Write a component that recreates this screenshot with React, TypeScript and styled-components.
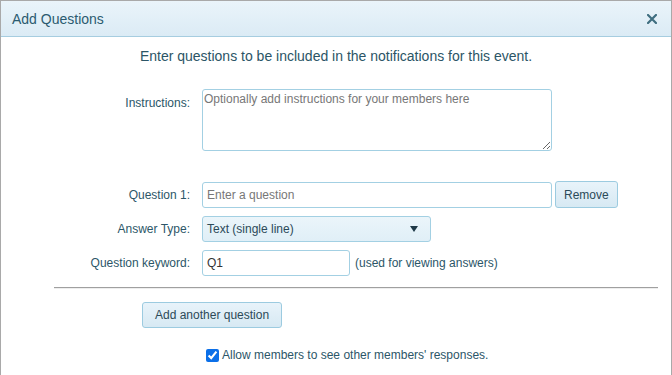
import styled, { createGlobalStyle } from 'styled-components'

const GlobalStyle = createGlobalStyle`
    html, body {
        margin: 0;
        padding: 0;
        background: #fff;
    }
    body {
        font-family: "Liberation Sans", Arial, sans-serif;
    }
`

const Dialog = styled.div`
    width: 672px;
    height: 375px;
    box-sizing: border-box;
    border: 1px solid #a9a9a9;
    border-bottom: none;
    overflow: hidden;
    background: #fff;
`

const Header = styled.div`
    display: flex;
    align-items: center;
    justify-content: space-between;
    height: 35px;
    padding: 0 14px 0 11px;
    background: linear-gradient(#eaf4fa, #dbebf5);
    border-bottom: 1px solid #a6cde0;
`

const Title = styled.h1`
    margin: 0;
    font-size: 14px;
    font-weight: 400;
    color: #2b5b70;
`

const Close = styled.button`
    border: none;
    background: none;
    padding: 0;
    display: flex;
    cursor: pointer;
`

const Body = styled.div`
    padding-top: 11px;
`

const Intro = styled.p`
    margin: 0 0 25px;
    text-align: center;
    font-size: 14px;
    color: #2b5566;
`

const Row = styled.div<{ top?: boolean; gapTop?: number }>`
    display: grid;
    grid-template-columns: 189px auto;
    column-gap: 12px;
    align-items: ${props => (props.top ? 'start' : 'center')};
    margin-top: ${props => props.gapTop ?? 0}px;
    margin-bottom: 8px;
`

const Label = styled.label<{ top?: boolean }>`
    text-align: right;
    font-size: 12px;
    color: #2c5668;
    padding-top: ${props => (props.top ? '7px' : '0')};
`

const Field = styled.div`
    display: flex;
    align-items: center;
    gap: 3px;
`

const boxBorder = `
    box-sizing: border-box;
    border: 1px solid #a3d0e3;
    border-radius: 3px;
    font-family: "Liberation Sans", Arial, sans-serif;
    font-size: 12px;
    color: #333;
    outline: none;
`

const TextArea = styled.textarea`
    ${boxBorder}
    width: 350px;
    height: 62px;
    padding: 2px 1px;
    resize: both;
    &::placeholder {
        color: #777;
    }
`

const Input = styled.input<{ width: number }>`
    ${boxBorder}
    width: ${props => props.width}px;
    height: 26px;
    padding: 0 4px;
    &::placeholder {
        color: #777;
    }
`

const Button = styled.button`
    ${boxBorder}
    height: 27px;
    padding: 0 8px;
    background: linear-gradient(#e8f3fa, #d7e9f3);
    border-color: #9ccbe0;
    color: #2c4a58;
    cursor: pointer;
`

const Select = styled.div`
    ${boxBorder}
    width: 229px;
    height: 26px;
    display: flex;
    align-items: center;
    justify-content: space-between;
    padding: 0 8px 0 4px;
    background: linear-gradient(#ebf5fa, #e0eff7);
    color: #2c4a58;
`

const Arrow = styled.span`
    width: 0;
    height: 0;
    border-left: 4px solid transparent;
    border-right: 4px solid transparent;
    border-top: 6px solid #1f3a48;
    margin-right: 4px;
`

const Hint = styled.span`
    font-size: 12px;
    color: #2c5668;
    margin-left: 2px;
`

const Divider = styled.hr`
    margin: 11px 13px 13px 53px;
    border: none;
    border-top: 1px solid #a0a0a0;
    border-bottom: 1px solid #eee;
`

const AddRow = styled.div`
    padding-left: 141px;
`

const AddButton = styled(Button)`
    height: 26px;
    padding: 0 12px;
`

const CheckRow = styled.label`
    display: flex;
    align-items: center;
    gap: 3px;
    margin: 20px 0 0 205px;
    font-size: 12px;
    color: #2c5668;
`

const Check = styled.input`
    margin: 0;
    width: 13px;
    height: 13px;
    accent-color: #0b6fe8;
`

export default function App() {
    return (
        <>
            <GlobalStyle />
            <Dialog>
                <Header>
                    <Title>Add Questions</Title>
                    <Close aria-label="Close">
                        <svg width="10" height="10" viewBox="0 0 10 10">
                            <path d="M1 1 L9 9 M9 1 L1 9" stroke="#3f6e80" strokeWidth="2.2" strokeLinecap="square" />
                        </svg>
                    </Close>
                </Header>
                <Body>
                    <Intro>Enter questions to be included in the notifications for this event.</Intro>
                    <Row top>
                        <Label top>Instructions:</Label>
                        <TextArea placeholder="Optionally add instructions for your members here" />
                    </Row>
                    <Row gapTop={30}>
                        <Label>Question 1:</Label>
                        <Field>
                            <Input width={350} placeholder="Enter a question" />
                            <Button>Remove</Button>
                        </Field>
                    </Row>
                    <Row>
                        <Label>Answer Type:</Label>
                        <Select>
                            <span>Text (single line)</span>
                            <Arrow />
                        </Select>
                    </Row>
                    <Row>
                        <Label>Question keyword:</Label>
                        <Field>
                            <Input width={148} defaultValue="Q1" />
                            <Hint>(used for viewing answers)</Hint>
                        </Field>
                    </Row>
                    <Divider />
                    <AddRow>
                        <AddButton>Add another question</AddButton>
                    </AddRow>
                    <CheckRow>
                        <Check type="checkbox" defaultChecked />
                        Allow members to see other members' responses.
                    </CheckRow>
                </Body>
            </Dialog>
        </>
    )
}
